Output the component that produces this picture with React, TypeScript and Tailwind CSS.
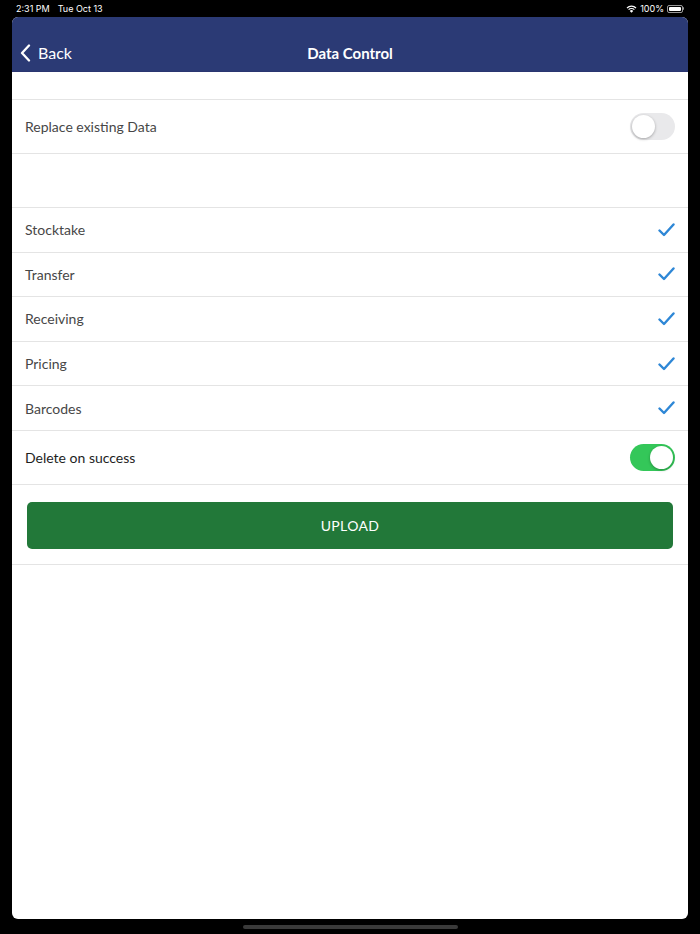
const ITEMS = ["Stocktake", "Transfer", "Receiving", "Pricing", "Barcodes"]

const Toggle = ({ on }: { on: boolean }) => (
	<div
		className={`w-[45px] h-[27px] rounded-full p-[2px] flex items-center ${
			on ? "bg-[#34c759] justify-end" : "bg-[#e9e9eb] justify-start"
		}`}
	>
		<div className="w-[23px] h-[23px] rounded-full bg-white shadow-[0_1px_3px_rgba(0,0,0,0.3)]" />
	</div>
)

const Check = () => (
	<svg width="17" height="14" viewBox="0 0 17 14" fill="none">
		<path d="M1.5 7.5 L6 12 L15.5 1.5" stroke="#2e87d6" strokeWidth="2.4" strokeLinecap="round" strokeLinejoin="round" />
	</svg>
)

export default function App() {
	return (
		<div className="w-[700px] h-[934px] bg-black flex flex-col font-['Lato','Noto_Sans',sans-serif]">
			{/* status bar */}
			<div className="h-[17px] flex items-center justify-between px-[16px] text-white text-[9px] font-['Inter',sans-serif]">
				<div className="flex gap-[8px]">
					<span>2:31 PM</span>
					<span>Tue Oct 13</span>
				</div>
				<div className="flex items-center gap-[3px]">
					<svg width="11" height="8" viewBox="0 0 11 8">
						<path d="M5.5 7.8 L3.8 5.9 A2.4 2.4 0 0 1 7.2 5.9 Z" fill="white" />
						<path d="M2.6 4.7 A4.1 4.1 0 0 1 8.4 4.7" stroke="white" strokeWidth="1.2" fill="none" />
						<path d="M1 3 A6.4 6.4 0 0 1 10 3" stroke="white" strokeWidth="1.2" fill="none" />
					</svg>
					<span>100%</span>
					<div className="flex items-center">
						<div className="w-[16px] h-[8px] rounded-[2px] border border-white/60 p-[1px]">
							<div className="w-full h-full bg-white rounded-[1px]" />
						</div>
						<div className="w-[1px] h-[3px] bg-white/60 rounded-r" />
					</div>
				</div>
			</div>

			{/* panel */}
			<div className="mx-[12px] h-[902px] bg-white rounded-[6px] overflow-hidden flex flex-col">
				<div className="h-[55px] bg-[#2b3a75] relative flex items-end pb-[6px] px-[8px] border-b border-[#2a3570]">
					<div className="flex items-center gap-[7px] text-white text-[16px] leading-[24px]">
						<svg width="11" height="18" viewBox="0 0 11 18" fill="none">
							<path d="M9 1.5 L2 9 L9 16.5" stroke="white" strokeWidth="2.3" strokeLinecap="round" strokeLinejoin="round" />
						</svg>
						<span>Back</span>
					</div>
					<div className="absolute left-0 right-0 bottom-[6px] text-center text-white text-[15px] font-bold leading-[24px]">
						Data Control
					</div>
				</div>

				<div className="h-[28px] border-b border-[#e4e4e4]" />

				<div className="h-[54px] flex items-center justify-between px-[13px] border-b border-[#e4e4e4]">
					<span className="text-[14px] text-[#474747]">Replace existing Data</span>
					<Toggle on={false} />
				</div>

				<div className="h-[54px] border-b border-[#e4e4e4]" />

				{ITEMS.map((item) => (
					<div key={item} className="h-[44.6px] flex items-center justify-between px-[13px] border-b border-[#e4e4e4]">
						<span className="text-[14px] text-[#474747]">{item}</span>
						<Check />
					</div>
				))}

				<div className="h-[54px] flex items-center justify-between px-[13px] border-b border-[#e4e4e4]">
					<span className="text-[14px] text-[#1e1e1e]">Delete on success</span>
					<Toggle on={true} />
				</div>

				<div className="h-[80px] px-[15px] pt-[17px] border-b border-[#e4e4e4]">
					<button className="w-full h-[47px] rounded-[5px] bg-[#227839] text-white text-[14px] font-normal tracking-wide">
						UPLOAD
					</button>
				</div>
			</div>

			{/* home indicator */}
			<div className="flex-1 flex items-center justify-center">
				<div className="w-[215px] h-[4px] rounded-full bg-[#3a3a3a]" />
			</div>
		</div>
	)
}
